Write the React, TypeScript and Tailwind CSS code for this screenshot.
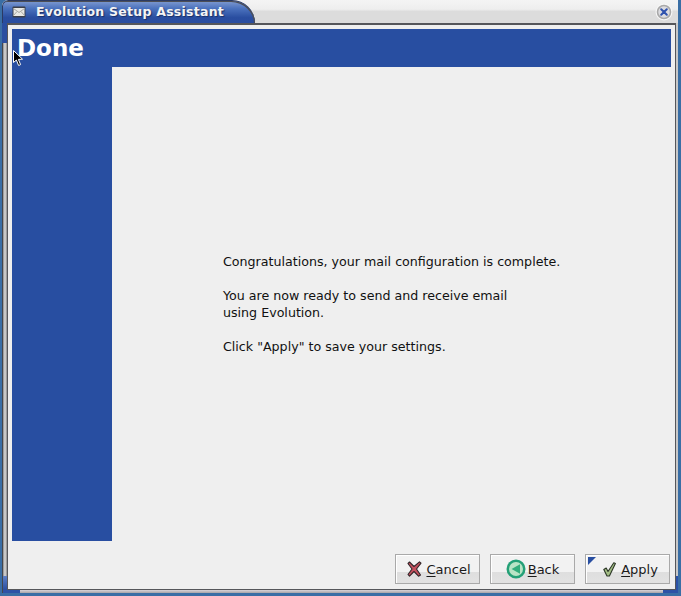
const ink = '#000000';

function MailIcon() {
  return (
    <svg width="14" height="12" viewBox="0 0 14 12" className="shrink-0">
      <rect x="0.5" y="0.5" width="13" height="11" rx="1" fill="#3b3f4a" />
      <rect x="1.5" y="2" width="11" height="8" fill="#e8e8e4" />
      <path d="M1.5 2.5 L7 6.5 L12.5 2.5 M1.5 9.5 L5 5.5 M12.5 9.5 L9 5.5" stroke="#a8a8a4" strokeWidth="1" fill="none" />
    </svg>
  );
}

function CloseIcon() {
  return (
    <svg width="18" height="18" viewBox="0 0 18 18">
      <circle cx="9" cy="9" r="8.5" fill="#f6f6f6" />
      <circle cx="9" cy="9" r="6.5" fill="#dcdce0" stroke="#a9a9a9" strokeWidth="1.6" />
      <path d="M6.2 6.2 L11.8 11.8 M11.8 6.2 L6.2 11.8" stroke="#2f52ae" strokeWidth="2" strokeLinecap="round" />
    </svg>
  );
}

function CancelIcon() {
  return (
    <svg width="15" height="16" viewBox="0 0 15 16">
      <path
        d="M2.5 1 L7 5.5 L12.5 0.8 L14 2.2 L9.5 8 L13.5 14 L11.5 15.2 L7 10.5 L2.5 15.2 L1 13.5 L5 8 L1 2.5 Z"
        fill="#c4505e"
        stroke="#33272a"
        strokeWidth="1.1"
        strokeLinejoin="round"
      />
    </svg>
  );
}

function BackIcon() {
  return (
    <svg width="20" height="20" viewBox="0 0 20 20">
      <circle cx="10" cy="10" r="9.5" fill="#24a077" />
      <circle cx="10" cy="10" r="7" fill="#b9e4c6" />
      <path d="M14 5.2 L14 14.8 L5.6 10 Z" fill="#33ad7c" />
    </svg>
  );
}

function ApplyIcon() {
  return (
    <svg width="13" height="15" viewBox="0 0 13 15">
      <path
        d="M0.8 7.5 L3.2 6 L5 9.5 L10.8 0.8 L12.4 1.6 L6.4 14 L4 14 Z"
        fill="#a3bd85"
        stroke="#2b3626"
        strokeWidth="1.1"
        strokeLinejoin="round"
      />
    </svg>
  );
}

function Cursor() {
  return (
    <svg width="11" height="17" viewBox="0 0 11 17" className="absolute left-[13px] top-[50px]">
      <path d="M0.5 0.5 L0.5 12.5 L3.4 10 L5.6 15.5 L7.6 14.6 L5.4 9.4 L9.5 9.2 Z" fill={ink} stroke="#ffffff" strokeWidth="1" />
    </svg>
  );
}

function WizardButton({ children, label, rest, className }: { children: React.ReactNode; label: string; rest: string; className: string }) {
  return (
    <button className={`relative flex h-[30px] w-[85px] items-center justify-center border border-[#a9a9a9] bg-[linear-gradient(#f2f2f2_0,#f2f2f2_60%,#dedede_60%,#e2e2e2_100%)] shadow-[inset_1px_1px_0_#ffffff] ${className}`}>
      {children}
      <span className="text-[13px] leading-none text-[#1a1a1a]">
        <span className="underline underline-offset-2">{label}</span>
        {rest}
      </span>
    </button>
  );
}

export default function App() {
  return (
    <div className="relative flex h-[596px] w-[681px] flex-col overflow-hidden bg-[#3a6ea5] pb-[3px] font-['DejaVu_Sans',sans-serif]">
      <div className="ml-[2px] mr-[3px] flex h-[23px] overflow-hidden rounded-tl-[6px] bg-[linear-gradient(#f4f4f4_0,#eeeeee_40%,#dcdcdc_50%,#dcdcdc_100%)]">
        <div className="flex w-[253px] items-center gap-[10px] rounded-tl-[6px] rounded-tr-[23px] border-t border-l border-[#2b3a63] bg-[linear-gradient(#7f9ad0_0,#4a71bd_35%,#2a4ea0_75%,#294c9f_100%)] pl-[9px] shadow-[inset_-1px_1px_0_#4d4f55]">
          <MailIcon />
          <span className="text-[12.5px] font-bold tracking-[0.25px] text-[#f4f4f4] [text-shadow:1px_1px_1px_#1b2f66]">Evolution Setup Assistant</span>
        </div>
        <div className="flex flex-1 items-start justify-end pr-[5px] pt-[3px]">
          <CloseIcon />
        </div>
      </div>
      <div className="ml-[2px] mr-[3px] flex flex-1">
        <div className="flex w-[5px] flex-col bg-[#2a4ea0]">
          <div className="h-[20px]" />
          <div className="flex-1 border-l border-[#44464c] bg-[linear-gradient(90deg,#8a8a8a,#dcdcdc_50%,#888888)]" />
          <div className="h-[14px] border-l border-[#44464c] bg-[linear-gradient(#5c7fc6,#2a4ea0)]" />
        </div>
        <div className="flex flex-1 flex-col border border-t-2 border-[#55565a] bg-[#efefef]">
          <div className="flex flex-1 flex-col py-[2px] pl-[2px] pr-[2px]">
            <div className="mx-[2px] mt-[2px] flex flex-1 flex-col">
              <div className="flex h-[38px] items-center bg-[#284ea1] pl-[5px] pt-[1px]">
                <h1 className="text-[23px] leading-none font-bold text-white">Done</h1>
              </div>
              <div className="flex h-[474px]">
                <div className="w-[100px] bg-[#284ea1]" />
                <div className="flex flex-1 flex-col justify-center pb-[1px] pl-[111px] text-[12.65px] leading-[17px] text-[#111111]">
                  <p className="whitespace-nowrap">Congratulations, your mail configuration is complete.</p>
                  <p className="mt-[17px]">You are now ready to send and receive email</p>
                  <p>using Evolution.</p>
                  <p className="mt-[17px]">Click "Apply" to save your settings.</p>
                </div>
              </div>
              <div className="flex flex-1 items-start justify-end gap-[10px] pt-[13px] pr-[1px]">
                <WizardButton label="C" rest="ancel" className="pl-[3px]">
                  <span className="mr-[4px] flex"><CancelIcon /></span>
                </WizardButton>
                <WizardButton label="B" rest="ack" className="">
                  <span className="mr-[2px] flex"><BackIcon /></span>
                </WizardButton>
                <WizardButton label="A" rest="pply" className="pl-[6px]">
                  <span className="mr-[5px] flex"><ApplyIcon /></span>
                  <span className="absolute left-[2px] top-[2px] h-0 w-0 border-t-[8px] border-r-[8px] border-t-[#284ea1] border-r-transparent" />
                </WizardButton>
              </div>
            </div>
          </div>
        </div>
        <div className="flex w-[2px] flex-col bg-[#c8c8c8]">
          <div className="flex-1" />
          <div className="h-[14px] bg-[#2d52a6]" />
        </div>
      </div>
      <div className="ml-[2px] mr-[3px] flex h-[3px] border-l border-[#44464c]">
        <div className="w-[17px] bg-[#2d52a6]" />
        <div className="flex-1 bg-[linear-gradient(#d8d4d8,#a8a4a8)]" />
        <div className="w-[15px] bg-[#2d52a6]" />
      </div>
      <Cursor />
    </div>
  );
}
